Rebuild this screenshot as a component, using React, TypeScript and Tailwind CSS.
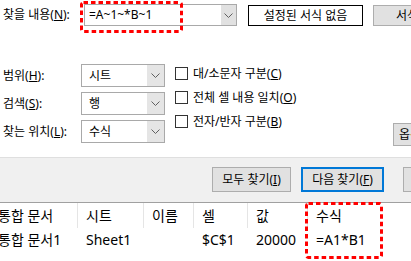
import { FC, ReactNode } from "react";

const Chevron: FC = () => (
  <svg width="9" height="5" viewBox="0 0 9 5" fill="none">
    <polyline points="0.5,0.5 4.5,4.5 8.5,0.5" stroke="#606060" strokeWidth="1" />
  </svg>
);

const DashedBox: FC<{ className: string; w: number; h: number }> = ({ className, w, h }) => (
  <svg className={`pointer-events-none absolute ${className}`} width={w} height={h}>
    <rect
      x="1.5"
      y="1.5"
      width={w - 3}
      height={h - 3}
      rx="2"
      fill="none"
      stroke="#ff0000"
      strokeWidth="3"
      strokeDasharray="4.5 3"
    />
  </svg>
);

const Select: FC<{ value: string }> = ({ value }) => (
  <div className="flex h-[23px] w-[84px] shrink-0 border border-[#a9a9a9] bg-white">
    <div className="flex-1 pl-[7px] leading-[21px]">{value}</div>
    <div className="flex w-[17px] items-center justify-center bg-[#e5e5e5]">
      <Chevron />
    </div>
  </div>
);

const Check: FC<{ children: ReactNode }> = ({ children }) => (
  <div className="flex h-[24px] items-start whitespace-nowrap pt-[3px]">
    <div className="h-[13px] w-[13px] shrink-0 border border-[#333] bg-white" />
    <span className="ml-[5px] leading-[13px]">{children}</span>
  </div>
);

const cols = [
  { w: "w-[88px]", head: "통합 문서", val: "통합 문서1" },
  { w: "w-[66px]", head: "시트", val: "Sheet1" },
  { w: "w-[50px]", head: "이름", val: "" },
  { w: "w-[54px]", head: "셀", val: "$C$1" },
  { w: "w-[60px]", head: "값", val: "20000" },
  { w: "w-[113px]", head: "수식", val: "=A1*B1" },
];

export default function App() {
  return (
    <div className="relative h-[261px] w-[411px] overflow-hidden bg-white font-['Noto_Sans','Noto_Sans_CJK_KR',sans-serif] text-[12px] text-black">
      {/* options area */}
      <div className="h-[158px] border-b border-[#dfdfdf] bg-white">
        <div className="flex items-start pt-[4px]">
          <div className="w-[84px] shrink-0 whitespace-nowrap pl-[3px] leading-[22px]">
            찾을 내용(<u>N</u>):
          </div>
          <div className="flex h-[22px] w-[153px] shrink-0 border border-[#a9a9a9]">
            <div className="flex-1 pl-[4px] leading-[20px]">=A~1~*B~1</div>
            <div className="flex w-[15px] items-center justify-center bg-[#e1e1e1]">
              <Chevron />
            </div>
          </div>
          <button className="ml-[11px] mt-[1px] h-[21px] w-[115px] shrink-0 border border-black bg-white leading-[19px]">
            설정된 서식 없음
          </button>
          <button className="ml-[10px] mt-[1px] h-[21px] w-[96px] shrink-0 border border-[#adadad] bg-[#e1e1e1] whitespace-nowrap leading-[19px]">
            서식(<u>M</u>)...
          </button>
        </div>

        <div className="mt-[38px] flex items-start">
          <div className="flex shrink-0 flex-col gap-[5px]">
            {[
              ["범위(", "H", "):", "시트"],
              ["검색(", "S", "):", "행"],
              ["찾는 위치(", "L", "):", "수식"],
            ].map(([a, k, b, v]) => (
              <div key={k} className="flex items-center">
                <div className="w-[81px] whitespace-nowrap pl-[3px]">
                  {a}
                  <u>{k}</u>
                  {b}
                </div>
                <Select value={v} />
              </div>
            ))}
          </div>
          <div className="ml-[10px] flex shrink-0 flex-col">
            <Check>
              대/소문자 구분(<u>C</u>)
            </Check>
            <Check>
              전체 셀 내용 일치(<u>O</u>)
            </Check>
            <Check>
              전자/반자 구분(<u>B</u>)
            </Check>
          </div>
          <button className="ml-auto mt-[59px] h-[23px] w-[75px] shrink-0 translate-x-[57px] whitespace-nowrap border border-[#adadad] bg-[#e1e1e1] pl-[5px] text-left leading-[21px]">
            옵션(<u>T</u>) &lt;&lt;
          </button>
        </div>
      </div>

      {/* buttons */}
      <div className="flex h-[45px] items-start gap-[10px] border-b border-[#a0a0a0] bg-[#f0f0f0] pl-[212px] pt-[9px]">
        <button className="h-[25px] w-[79px] shrink-0 border border-[#adadad] bg-[#e1e1e1] whitespace-nowrap leading-[23px]">
          모두 찾기(<u>I</u>)
        </button>
        <button className="h-[25px] w-[83px] shrink-0 border-2 border-[#0078d7] bg-[#e1e1e1] whitespace-nowrap leading-[21px]">
          다음 찾기(<u>F</u>)
        </button>
        <button className="ml-[9px] h-[25px] w-[75px] shrink-0 border border-[#adadad] bg-[#e1e1e1] leading-[23px]">
          닫기
        </button>
      </div>

      {/* results */}
      <div className="ml-[-10px] text-[14px]">
        <div className="flex h-[25px]">
          {cols.map((c, i) => (
            <div
              key={c.head}
              className={`${c.w} shrink-0 whitespace-nowrap pl-[8px] leading-[25px] ${i < cols.length - 1 ? "border-r border-[#e5e5e5]" : ""}`}
            >
              {c.head}
            </div>
          ))}
        </div>
        <div className="flex h-[25px]">
          {cols.map((c) => (
            <div key={c.head} className={`${c.w} shrink-0 whitespace-nowrap pl-[8px] leading-[24px]`}>
              {c.val}
            </div>
          ))}
        </div>
      </div>

      <DashedBox className="left-[80px] top-[1px]" w={103} h={32} />
      <DashedBox className="left-[305px] top-[202px]" w={78} h={57} />
    </div>
  );
}
